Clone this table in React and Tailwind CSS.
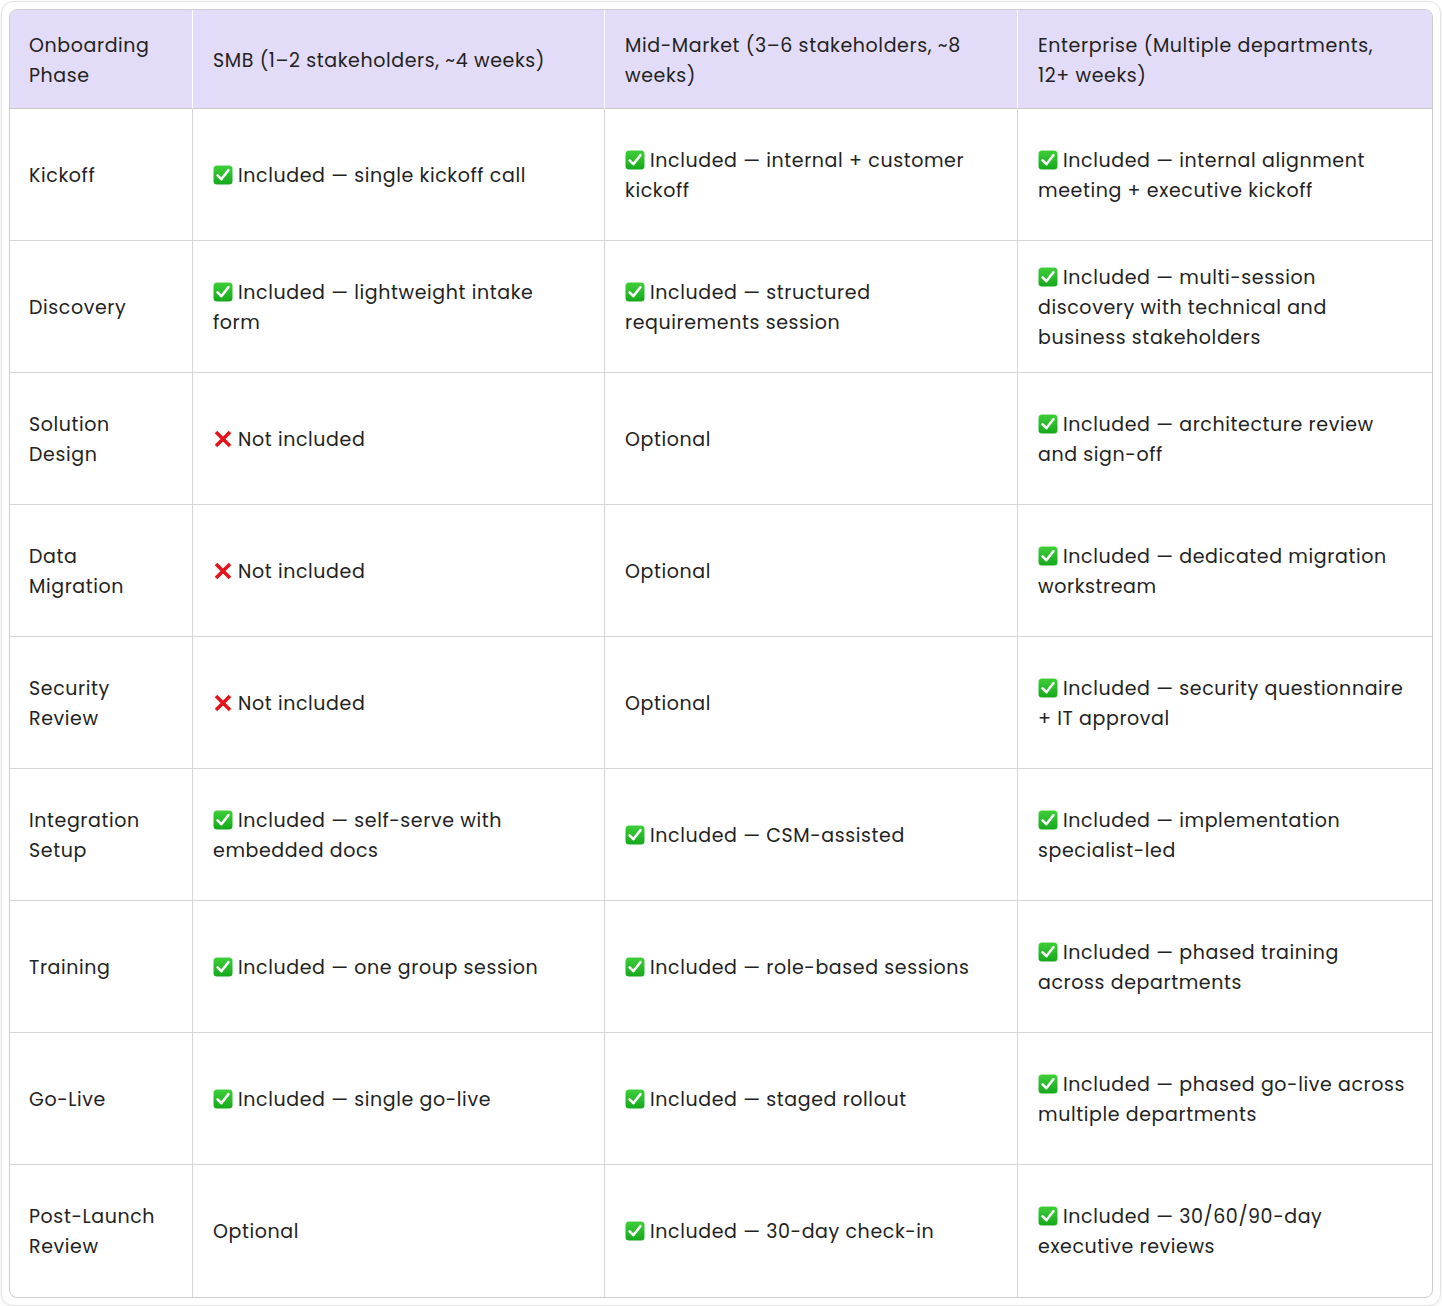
import React from "react";

const Check = () => (
  <svg viewBox="0 0 20 20" className="inline-block w-[20px] h-[20px] mr-[5px] align-[-3px]">
    <defs>
      <linearGradient id="g" x1="0" y1="0" x2="0" y2="1">
        <stop offset="0" stopColor="#3fcf3a" />
        <stop offset="1" stopColor="#16a81c" />
      </linearGradient>
    </defs>
    <rect x="0.5" y="0.5" width="19" height="19" rx="3.5" fill="url(#g)" />
    <path d="M4.6 10.4 L8.3 14.2 L15.4 5.2" fill="none" stroke="#fff" strokeWidth="2.6" strokeLinecap="round" strokeLinejoin="round" />
  </svg>
);

const Cross = () => (
  <svg viewBox="0 0 20 20" className="inline-block w-[20px] h-[20px] mr-[5px] align-[-3px]">
    <path d="M3 3 L17 17 M17 3 L3 17" stroke="#e5141b" strokeWidth="3.6" strokeLinecap="butt" />
  </svg>
);

const headers = [
  "Onboarding Phase",
  "SMB (1–2 stakeholders, ~4 weeks)",
  "Mid-Market (3–6 stakeholders, ~8 weeks)",
  "Enterprise (Multiple departments, 12+ weeks)",
];

// y = included, n = not included, o = plain text
const rows = [
  ["Kickoff", ["y", "single kickoff call"], ["y", "internal + customer kickoff"], ["y", "internal alignment meeting + executive kickoff"]],
  ["Discovery", ["y", "lightweight intake form"], ["y", "structured requirements session"], ["y", "multi-session discovery with technical and business stakeholders"]],
  ["Solution Design", ["n"], ["o", "Optional"], ["y", "architecture review and sign-off"]],
  ["Data Migration", ["n"], ["o", "Optional"], ["y", "dedicated migration workstream"]],
  ["Security Review", ["n"], ["o", "Optional"], ["y", "security questionnaire + IT approval"]],
  ["Integration Setup", ["y", "self-serve with embedded docs"], ["y", "CSM-assisted"], ["y", "implementation specialist-led"]],
  ["Training", ["y", "one group session"], ["y", "role-based sessions"], ["y", "phased training across departments"]],
  ["Go-Live", ["y", "single go-live"], ["y", "staged rollout"], ["y", "phased go-live across multiple departments"]],
  ["Post-Launch Review", ["o", "Optional"], ["y", "30-day check-in"], ["y", "30/60/90-day executive reviews"]],
];

function Cell({ value }) {
  const [kind, text] = value;
  if (kind === "n") return <span><Cross />Not included</span>;
  if (kind === "o") return <span>{text}</span>;
  return <span><Check />Included — {text}</span>;
}

export default function App() {
  return (
    <div className="w-[1442px] h-[1306px] bg-white p-px font-['Poppins','Inter',sans-serif] text-[19px] leading-[30px] tracking-[0.6px] text-[#222222]">
      <div className="h-[1305px] rounded-xl border border-[#e2e2e2] shadow-[0_1px_3px_rgba(0,0,0,0.08)] p-[7px]">
        <div className="border border-[#cccccc] rounded-lg overflow-hidden grid grid-cols-[183px_412px_413px_414px]">
          {headers.map((h, i) => (
            <div
              key={h}
              className={`h-[99px] bg-[#e3dcf8] border-b border-[#c9c9c9] pt-[4px] flex items-center ${i === 0 ? "pl-[19px]" : "pl-[20px]"} ${i < 3 ? "border-r border-r-white pr-[18px]" : "pr-[24px]"}`}
            >
              {h}
            </div>
          ))}
          {rows.map((row, r) =>
            row.map((cell, c) => (
              <div
                key={r + "-" + c}
                className={`h-[132px] flex items-center pt-[2px] border-[#d4d4d4] ${c === 0 ? "pl-[19px]" : "pl-[20px]"} ${c < 3 ? "border-r pr-[18px]" : "pr-[24px]"} ${r < rows.length - 1 ? "border-b" : ""}`}
              >
                {c === 0 ? <span>{cell}</span> : <Cell value={cell} />}
              </div>
            ))
          )}
        </div>
      </div>
    </div>
  );
}
